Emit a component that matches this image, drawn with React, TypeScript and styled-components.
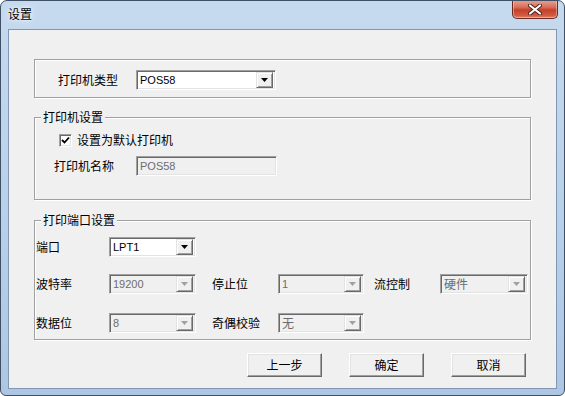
import React from "react";
import styled, { createGlobalStyle } from "styled-components";

const GlobalStyle = createGlobalStyle`
  html, body {
    margin: 0;
    padding: 0;
    background: #ffffff;
  }
  body {
    font-family: "Noto Sans CJK SC", "Liberation Sans", sans-serif;
    font-size: 12px;
    color: #000;
  }
`;

const Frame = styled.div`
  width: 565px;
  height: 396px;
  box-sizing: border-box;
  border: 1px solid #3f4f66;
  border-radius: 7px 7px 6px 6px;
  background: linear-gradient(to bottom, #c6daee 0%, #bcd3eb 40%, #adc7e3 100%);
  display: flex;
  flex-direction: column;
  overflow: hidden;
`;

const TitleBar = styled.div`
  height: 28px;
  display: flex;
  align-items: flex-start;
  justify-content: space-between;
  padding-left: 7px;
  padding-right: 6px;
`;

const Title = styled.span`
  margin-top: 6px;
  font-size: 12px;
  line-height: 14px;
  color: #000;
  text-shadow: 0 0 6px #ffffff, 0 0 3px #ffffff;
`;

const CloseButton = styled.div`
  width: 46px;
  height: 19px;
  margin-top: -1px;
  box-sizing: border-box;
  border: 1px solid #6c2b22;
  border-top: none;
  border-radius: 0 0 5px 5px;
  background: linear-gradient(to bottom, #e9a595 0%, #d86f5a 40%, #c4402a 55%, #cf5a40 85%, #e1866c 100%);
  box-shadow: inset 0 0 0 1px rgba(255, 220, 210, 0.45);
  display: flex;
  align-items: center;
  justify-content: center;
`;

const Client = styled.div`
  margin: 0 7px 0 7px;
  height: 360px;
  box-sizing: border-box;
  border: 1px solid #8096b3;
  background: #f0f0f0;
  display: flex;
  flex-direction: column;
  padding-left: 25px;
`;

const Group = styled.div<{ $h: number; $mt: number }>`
  position: relative;
  width: 497px;
  height: ${(p) => p.$h}px;
  margin-top: ${(p) => p.$mt}px;
  box-sizing: border-box;
  border: 1px solid #a0a0a0;
  box-shadow: inset 1px 1px 0 #ffffff, 1px 1px 0 #ffffff;
`;

const Legend = styled.span`
  position: absolute;
  left: 6px;
  top: -8px;
  padding: 0 2px;
  background: #f0f0f0;
  line-height: 14px;
`;

const Row = styled.div<{ $mt: number; $pl: number }>`
  display: flex;
  align-items: center;
  margin-top: ${(p) => p.$mt}px;
  padding-left: ${(p) => p.$pl}px;
  height: 20px;
`;

const Label = styled.span<{ $w: number; $ml?: number }>`
  width: ${(p) => p.$w}px;
  margin-left: ${(p) => p.$ml ?? 0}px;
  line-height: 14px;
  flex-shrink: 0;
`;

const Field = styled.div<{ $w: number; $disabled?: boolean }>`
  width: ${(p) => p.$w}px;
  height: 20px;
  box-sizing: border-box;
  border: 1px solid;
  border-color: #a0a0a0 #ffffff #ffffff #a0a0a0;
  box-shadow: inset 1px 1px 0 #696969, inset -1px -1px 0 #e3e3e3;
  background: ${(p) => (p.$disabled ? "#f0f0f0" : "#ffffff")};
  display: flex;
  align-items: center;
  padding: 1px 2px 1px 2px;
  flex-shrink: 0;
`;

const FieldText = styled.span<{ $disabled?: boolean; $cjk?: boolean }>`
  flex: 1;
  padding-left: 1px;
  font-family: ${(p) =>
    p.$cjk ? `"Noto Sans CJK SC", sans-serif` : `"Liberation Sans", "DejaVu Sans", sans-serif`};
  font-size: ${(p) => (p.$cjk ? 12 : 11)}px;
  line-height: 14px;
  color: ${(p) => (p.$disabled ? "#6d6d6d" : "#000000")};
`;

const DropButton = styled.div`
  width: 17px;
  height: 16px;
  box-sizing: border-box;
  border: 1px solid;
  border-color: #e3e3e3 #696969 #696969 #e3e3e3;
  box-shadow: inset 1px 1px 0 #ffffff, inset -1px -1px 0 #a0a0a0;
  background: #f0f0f0;
  display: flex;
  align-items: center;
  justify-content: center;
`;

const CheckRow = styled.label`
  display: flex;
  align-items: center;
  gap: 5px;
  margin-top: 15px;
  padding-left: 24px;
  line-height: 14px;
`;

const CheckBox = styled.span`
  width: 13px;
  height: 13px;
  box-sizing: border-box;
  border: 1px solid;
  border-color: #a0a0a0 #ffffff #ffffff #a0a0a0;
  box-shadow: inset 1px 1px 0 #696969, inset -1px -1px 0 #e3e3e3;
  background: #ffffff;
  display: flex;
  align-items: center;
  justify-content: center;
`;

const ButtonBar = styled.div`
  display: flex;
  gap: 27px;
  margin-top: 13px;
  padding-left: 213px;
`;

const Button = styled.button`
  width: 75px;
  height: 24px;
  box-sizing: border-box;
  border: 1px solid;
  border-color: #ffffff #696969 #696969 #ffffff;
  box-shadow: inset -1px -1px 0 #a0a0a0, inset 1px 1px 0 #e3e3e3;
  background: #f0f0f0;
  font-family: "Noto Sans CJK SC", sans-serif;
  font-size: 12px;
  line-height: 14px;
  color: #000;
  padding: 0;
`;

const Arrow = ({ disabled }: { disabled?: boolean }) => (
  <svg width="7" height="4" viewBox="0 0 7 4">
    <path d="M0 0H7L3.5 4Z" fill={disabled ? "#a0a0a0" : "#000000"} />
  </svg>
);

type ComboProps = { value: string; width: number; disabled?: boolean; cjk?: boolean };

const Combo = ({ value, width, disabled, cjk }: ComboProps) => (
  <Field $w={width} $disabled={disabled}>
    <FieldText $disabled={disabled} $cjk={cjk}>
      {value}
    </FieldText>
    <DropButton>
      <Arrow disabled={disabled} />
    </DropButton>
  </Field>
);

export default function App() {
  return (
    <>
      <GlobalStyle />
      <Frame>
        <TitleBar>
          <Title>设置</Title>
          <CloseButton>
            <svg width="14" height="11" viewBox="0 0 14 11">
              <path d="M2 1.5L12 9.5M12 1.5L2 9.5" stroke="#4a2018" strokeWidth="4" strokeLinecap="round" />
              <path d="M2 1.5L12 9.5M12 1.5L2 9.5" stroke="#ffffff" strokeWidth="2.2" strokeLinecap="round" />
            </svg>
          </CloseButton>
        </TitleBar>
        <Client>
          <Group $h={39} $mt={29}>
            <Row $mt={10} $pl={23}>
              <Label $w={78}>打印机类型</Label>
              <Combo value="POS58" width={140} />
            </Row>
          </Group>

          <Group $h={83} $mt={19}>
            <Legend>打印机设置</Legend>
            <CheckRow>
              <CheckBox>
                <svg width="9" height="9" viewBox="0 0 9 9">
                  <path d="M1 4L3.5 6.5L8 1.5" stroke="#000" strokeWidth="1.8" fill="none" />
                </svg>
              </CheckBox>
              设置为默认打印机
            </CheckRow>
            <Row $mt={9} $pl={19}>
              <Label $w={82}>打印机名称</Label>
              <Field $w={141} $disabled>
                <FieldText $disabled>POS58</FieldText>
              </Field>
            </Row>
          </Group>

          <Group $h={120} $mt={20}>
            <Legend>打印端口设置</Legend>
            <Row $mt={16} $pl={1}>
              <Label $w={73}>端口</Label>
              <Combo value="LPT1" width={87} />
            </Row>
            <Row $mt={17} $pl={1}>
              <Label $w={73}>波特率</Label>
              <Combo value="19200" width={87} disabled />
              <Label $w={66} $ml={16}>停止位</Label>
              <Combo value="1" width={86} disabled />
              <Label $w={66} $ml={10}>流控制</Label>
              <Combo value="硬件" width={88} disabled cjk />
            </Row>
            <Row $mt={19} $pl={1}>
              <Label $w={73}>数据位</Label>
              <Combo value="8" width={87} disabled />
              <Label $w={66} $ml={16}>奇偶校验</Label>
              <Combo value="无" width={86} disabled cjk />
            </Row>
          </Group>

          <ButtonBar>
            <Button>上一步</Button>
            <Button>确定</Button>
            <Button>取消</Button>
          </ButtonBar>
        </Client>
      </Frame>
    </>
  );
}
